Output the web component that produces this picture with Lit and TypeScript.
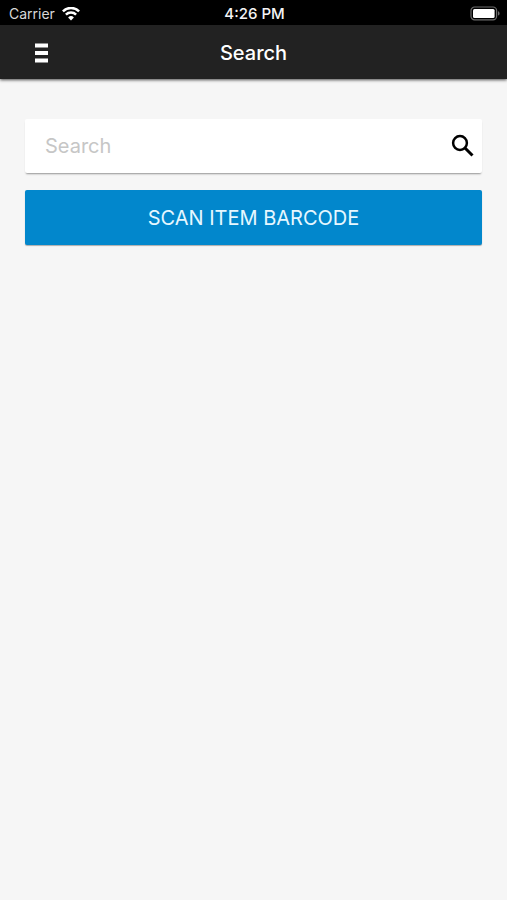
import { LitElement, html, css } from "lit";
import { customElement, state } from "lit/decorators.js";

@customElement("status-bar")
export class StatusBar extends LitElement {
  static styles = css`
    :host {
      display: grid;
      grid-template-columns: 1fr auto 1fr;
      align-items: center;
      height: 25px;
      padding: 2px 7px 0 9px;
      box-sizing: border-box;
      background: #000;
      color: #fff;
      font-size: 14px;
      line-height: 20px;
    }
    .carrier {
      display: flex;
      align-items: center;
      gap: 7px;
      color: #d8d8d8;
    }
    .time {
      font-size: 15px;
      font-weight: 500;
      color: #f4f4f4;
    }
    .battery {
      justify-self: end;
    }
    svg {
      display: block;
    }
  `;

  render() {
    return html`
      <div class="carrier">
        <span>Carrier</span>
        <svg width="18" height="14" viewBox="0 0 18 14" fill="none" stroke="#fff" stroke-width="2.5" aria-label="Wi-Fi">
          <path d="M0.9 4.3a11.5 11.5 0 0 1 16.2 0" />
          <path d="M3.9 7.7a7.2 7.2 0 0 1 10.2 0" />
          <path d="M9 13.4L6.1 10.5a4.1 4.1 0 0 1 5.8 0z" fill="#fff" stroke="none" />
        </svg>
      </div>
      <span class="time">4:26 PM</span>
      <svg class="battery" width="30" height="16" viewBox="0 0 30 16" aria-label="Battery full">
        <rect x="1" y="1" width="25.6" height="12.8" rx="3.6" fill="#000" stroke="#6c6c6c" stroke-width="1.2" />
        <rect x="3" y="2.9" width="21.6" height="9" rx="1.5" fill="#fff" />
        <path d="M28 5.2c2.1.7 2.1 3.7 0 4.4z" fill="#6c6c6c" />
      </svg>
    `;
  }
}

@customElement("app-header")
export class AppHeader extends LitElement {
  static styles = css`
    :host {
      display: grid;
      grid-template-columns: 1fr auto 1fr;
      align-items: center;
      height: 54px;
      padding-top: 1px;
      box-sizing: border-box;
      background: #222;
      color: #fff;
      box-shadow: 0 1px 3px rgba(0, 0, 0, 0.7);
    }
    .menu {
      justify-self: start;
      margin-left: 24px;
      padding: 8px 10px;
      border: 0;
      background: none;
      color: inherit;
    }
    svg {
      display: block;
    }
    h1 {
      margin: 0;
      font-size: 20px;
      font-weight: 500;
      line-height: 24px;
    }
  `;

  render() {
    return html`
      <button class="menu" aria-label="Menu">
        <svg width="14" height="20" viewBox="0 0 14 20" fill="currentColor">
          <path d="M1 0.6h13v4H1zM1 8h13v4H1zM1 15.5h13v4H1z" />
        </svg>
      </button>
      <h1>Search</h1>
    `;
  }
}

@customElement("app-root")
export class AppRoot extends LitElement {
  static styles = css`
    :host {
      display: flex;
      flex-direction: column;
      min-height: 100vh;
      background: #f6f6f6;
      font-family: Inter, "Liberation Sans", sans-serif;
    }
    main {
      display: flex;
      flex-direction: column;
      gap: 17px;
      padding: 40px 25px;
    }
    .field {
      display: flex;
      align-items: center;
      height: 54px;
      background: #fff;
      border-radius: 2px;
      box-shadow: 0 2px 2px -1px rgba(0, 0, 0, 0.4);
    }
    input {
      flex: 1;
      min-width: 0;
      height: 100%;
      box-sizing: border-box;
      padding: 0 0 0 20px;
      border: 0;
      outline: 0;
      background: none;
      font: inherit;
      font-size: 20px;
      color: #222;
    }
    input::placeholder {
      color: #c6c6c6;
      opacity: 1;
    }
    .go {
      padding: 6px 7px;
      border: 0;
      background: none;
      color: #000;
    }
    svg {
      display: block;
    }
    .scan {
      height: 55px;
      padding: 0 16px;
      border: 0;
      border-radius: 2px;
      background: #0287cc;
      color: #e6f7ff;
      font: inherit;
      font-size: 20px;
      box-shadow: 0 1px 1px rgba(0, 0, 0, 0.3);
    }
  `;

  @state() private query = "";

  private onInput(e: Event) {
    this.query = (e.target as HTMLInputElement).value;
  }

  render() {
    return html`
      <status-bar></status-bar>
      <app-header></app-header>
      <main>
        <div class="field">
          <input type="text" placeholder="Search" aria-label="Search" .value=${this.query} @input=${this.onInput} />
          <button class="go" aria-label="Submit search">
            <svg width="24" height="24" viewBox="0 0 24 24" fill="none" stroke="currentColor">
              <circle cx="9" cy="9" r="6.9" stroke-width="2.5" />
              <path d="M14 14l7.5 7.5" stroke-width="3" />
            </svg>
          </button>
        </div>
        <button class="scan">SCAN ITEM BARCODE</button>
      </main>
    `;
  }
}
